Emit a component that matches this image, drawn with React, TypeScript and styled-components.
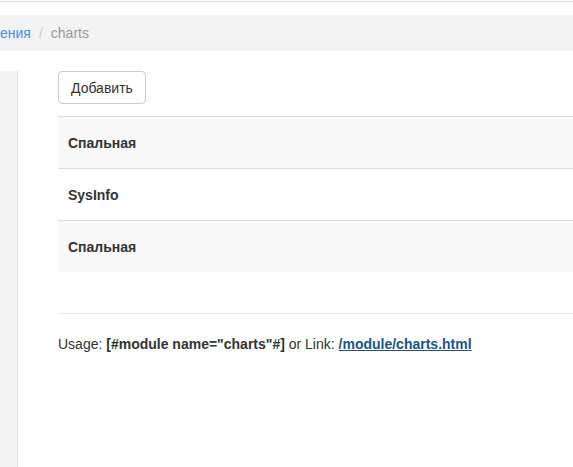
import React from "react";
import styled, { createGlobalStyle } from "styled-components";

const GlobalStyle = createGlobalStyle`
  html, body {
    margin: 0;
    padding: 0;
    background: #fff;
    font-family: "Liberation Sans", Arial, sans-serif;
    font-size: 14px;
    color: #333;
  }
  #root {
    min-height: 467px;
  }
`;

const Page = styled.div`
  display: flex;
  flex-direction: column;
  height: 467px;
  overflow: hidden;
`;

const TopBar = styled.div`
  height: 1px;
  border-bottom: 1px solid #dedede;
`;

const Breadcrumb = styled.div`
  margin-top: 13px;
  height: 36px;
  background: #f3f3f3;
  display: flex;
  align-items: center;
  font-size: 14px;
  white-space: nowrap;
`;

const Crumb = styled.a`
  color: #4a90d9;
  text-decoration: none;
`;

const Divider = styled.span`
  color: #ccc;
  padding: 0 8px;
`;

const Current = styled.span`
  color: #999;
`;

const Main = styled.div`
  flex: 1;
  display: flex;
  margin-top: 20px;
  min-height: 0;
`;

const Sidebar = styled.aside`
  width: 17px;
  flex-shrink: 0;
  background: #f3f3f3;
  border-right: 1px solid #e3e3e3;
`;

const Content = styled.div`
  flex: 1;
  padding-left: 40px;
  min-width: 0;
`;

const Button = styled.button`
  font-family: "Liberation Sans", Arial, sans-serif;
  font-size: 14px;
  color: #333;
  background: #fff;
  border: 1px solid #ccc;
  border-radius: 4px;
  height: 33px;
  padding: 0 12px;
  cursor: pointer;
`;

const Table = styled.div`
  margin-top: 12px;
  display: flex;
  flex-direction: column;
`;

const Row = styled.div<{ $striped: boolean }>`
  height: 51px;
  border-top: 1px solid #dddddd;
  background: ${(p) => (p.$striped ? "#f9f9f9" : "#fff")};
  display: flex;
  align-items: center;
  padding-left: 10px;
  font-size: 14px;
  font-weight: bold;
  color: #333;
`;

const Rule = styled.hr`
  margin: 41px 0 0;
  border: 0;
  border-top: 1px solid #eeeeee;
`;

const Usage = styled.p`
  margin: 20px 0 0;
  font-size: 14px;
  line-height: 20px;
  color: #333;
`;

const Code = styled.b`
  color: #333;
`;

const UsageLink = styled.a`
  color: #23527c;
  font-weight: bold;
  text-decoration: underline;
`;

const rows = ["Спальная", "SysInfo", "Спальная"];

export default function App() {
  return (
    <Page>
      <GlobalStyle />
      <TopBar />
      <Breadcrumb>
        <Crumb href="#">ения</Crumb>
        <Divider>/</Divider>
        <Current>charts</Current>
      </Breadcrumb>
      <Main>
        <Sidebar />
        <Content>
          <Button>Добавить</Button>
          <Table>
            {rows.map((title, i) => (
              <Row key={i} $striped={i % 2 === 0}>
                {title}
              </Row>
            ))}
          </Table>
          <Rule />
          <Usage>
            Usage: <Code>[#module name="charts"#]</Code> or Link:{" "}
            <UsageLink href="#">/module/charts.html</UsageLink>
          </Usage>
        </Content>
      </Main>
    </Page>
  );
}
